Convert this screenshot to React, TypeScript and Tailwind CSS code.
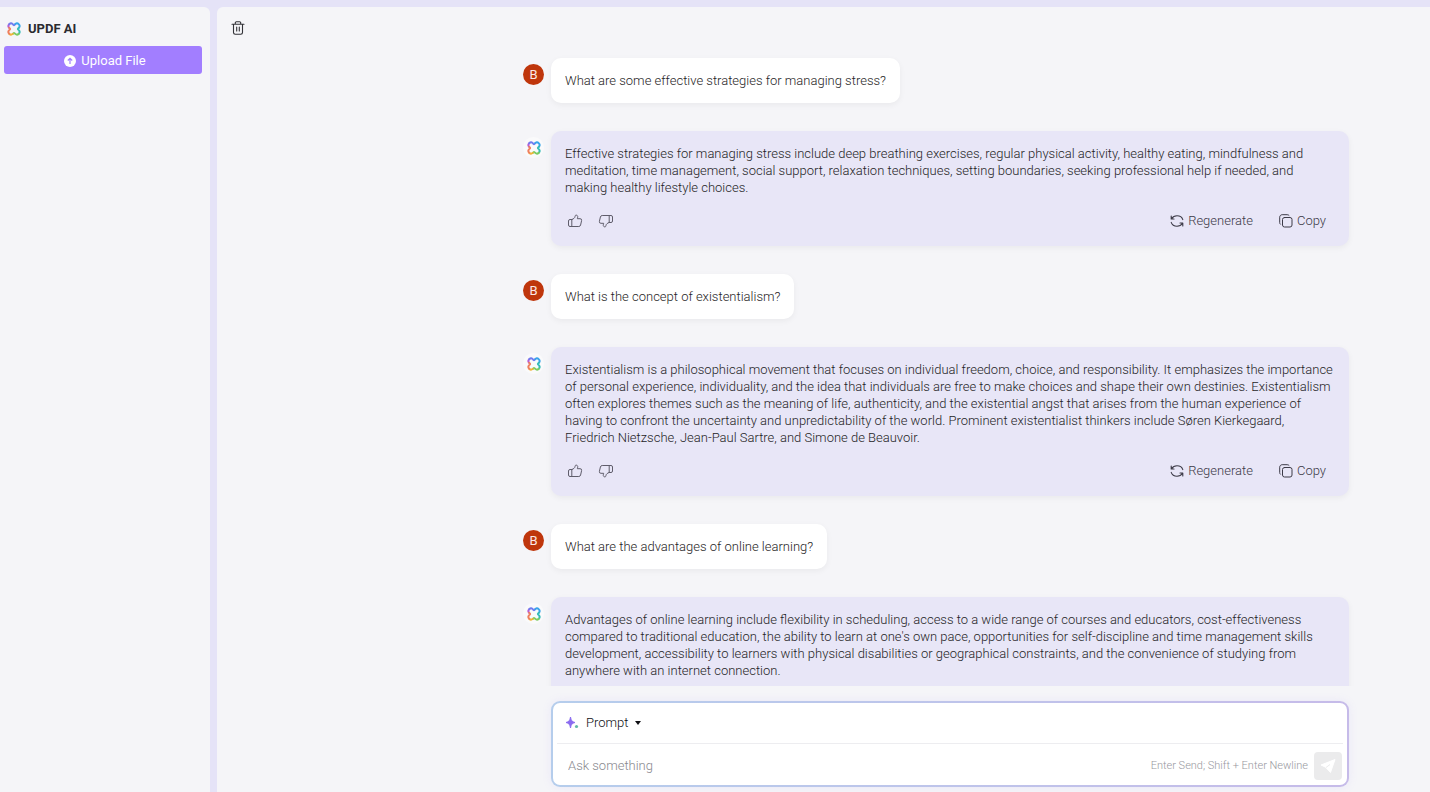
import { useState } from "react";

type Message = {
    question: string;
    answer: string;
    done: boolean;
};

const MESSAGES: Message[] = [
    {
        question: "What are some effective strategies for managing stress?",
        answer: "Effective strategies for managing stress include deep breathing exercises, regular physical activity, healthy eating, mindfulness and meditation, time management, social support, relaxation techniques, setting boundaries, seeking professional help if needed, and making healthy lifestyle choices.",
        done: true,
    },
    {
        question: "What is the concept of existentialism?",
        answer: "Existentialism is a philosophical movement that focuses on individual freedom, choice, and responsibility. It emphasizes the importance of personal experience, individuality, and the idea that individuals are free to make choices and shape their own destinies. Existentialism often explores themes such as the meaning of life, authenticity, and the existential angst that arises from the human experience of having to confront the uncertainty and unpredictability of the world. Prominent existentialist thinkers include Søren Kierkegaard, Friedrich Nietzsche, Jean-Paul Sartre, and Simone de Beauvoir.",
        done: true,
    },
    {
        question: "What are the advantages of online learning?",
        answer: "Advantages of online learning include flexibility in scheduling, access to a wide range of courses and educators, cost-effectiveness compared to traditional education, the ability to learn at one's own pace, opportunities for self-discipline and time management skills development, accessibility to learners with physical disabilities or geographical constraints, and the convenience of studying from anywhere with an internet connection.",
        done: false,
    },
];

function Logo() {
    return (
        <svg viewBox="0 0 28 28" className="size-[14px]" fill="none" strokeWidth="3.8" strokeLinecap="round" aria-hidden="true">
            <path d="M4.200 11.500A5 5 0 0 1 4.500 4.500" stroke="#b45fd6" />
            <path d="M4.500 4.500A5 5 0 0 1 11.500 4.200Q14 8.500 16.500 4.200" stroke="#6f7cf0" />
            <path d="M16.500 4.200A5 5 0 0 1 23.500 4.500A5 5 0 0 1 23.800 11.500" stroke="#3aa5ea" />
            <path d="M23.800 11.500Q19.500 14 23.800 16.500A5 5 0 0 1 23.500 23.500" stroke="#35bdb8" />
            <path d="M23.500 23.500A5 5 0 0 1 16.500 23.800Q14 19.500 11.500 23.800" stroke="#7ccb62" />
            <path d="M11.500 23.800A5 5 0 0 1 4.500 23.500" stroke="#f3b437" />
            <path d="M4.500 23.500A5 5 0 0 1 4.200 16.500Q8.500 14 4.200 11.500" stroke="#ef7f5e" />
        </svg>
    );
}

function ThumbIcon({ down = false }: { down?: boolean }) {
    return (
        <svg viewBox="0 0 16 16" className={down ? "size-4 rotate-180" : "size-4"} fill="none" stroke="currentColor" strokeWidth="1" strokeLinejoin="round" strokeLinecap="round" aria-hidden="true">
            <path d="M4.800 6.500V13.500M4.800 6.500C6.500 6 7.800 5 8 3.600C8.200 2.400 8.600 2 9.300 2.100C10.500 2.300 10.900 3.200 10.700 4.200L10.300 5.700H13A1.600 1.600 0 0 1 14.600 7.600L13.600 12A1.900 1.900 0 0 1 11.800 13.500H3A1.500 1.500 0 0 1 1.500 12V8A1.500 1.500 0 0 1 3 6.500H4.800Z" />
        </svg>
    );
}

function RegenerateIcon() {
    return (
        <svg viewBox="0 0 14 14" className="size-[14px]" fill="none" stroke="currentColor" strokeWidth="1.1" strokeLinecap="round" strokeLinejoin="round" aria-hidden="true">
            <path d="M1.200 2V5H4M1.500 4.800C2.800 2.800 4.800 1.800 7 1.800C9.800 1.800 12 3.200 12.800 5.600" />
            <path d="M12.800 12V9H10M12.500 9.200C11.200 11.200 9.200 12.200 7 12.200C4.200 12.200 2 10.800 1.200 8.400" />
        </svg>
    );
}

function CopyIcon() {
    return (
        <svg viewBox="0 0 14 14" className="size-[14px]" fill="none" stroke="currentColor" strokeWidth="1" strokeLinecap="round" aria-hidden="true">
            <rect x="3.500" y="3.500" width="9.500" height="9.500" rx="2" />
            <path d="M1.400 10.200C1 9.800 .7 9.400 .7 8.600V3.200C.7 1.800 1.800 .7 3.200 .7H8.200C9 .7 9.600 1 10 1.400" />
        </svg>
    );
}

function Question({ text }: { text: string }) {
    return (
        <div className="flex items-start gap-[7px]">
            <div className="mt-[6px] flex size-[21px] shrink-0 items-center justify-center rounded-full bg-[#bf360c] text-[13px] font-normal text-[#fbe9e7]">B</div>
            <p className="rounded-[10px] bg-white p-[14px] leading-[17px] shadow-[0_2px_6px_rgba(0,0,0,0.05)]">{text}</p>
        </div>
    );
}

function Answer({ text, done }: { text: string; done: boolean }) {
    return (
        <div className="flex items-start gap-[7px]">
            <div className="mt-[6px] flex size-[21px] shrink-0 items-center justify-center rounded-full bg-[#fafafb]">
                <Logo />
            </div>
            <div className="min-w-0 flex-1 rounded-[10px] bg-[#e8e6f7] p-[14px] shadow-[0_2px_6px_rgba(0,0,0,0.05)]">
                <p className="leading-[17px]">{text}</p>
                <div className="mt-[14px] flex h-[22px] items-center justify-between pr-[9px]">
                    {done && (
                        <>
                            <div className="flex gap-[15px] pl-[2px] text-[#5f5d6b]">
                                <button type="button" aria-label="Like" className="cursor-pointer">
                                    <ThumbIcon />
                                </button>
                                <button type="button" aria-label="Dislike" className="cursor-pointer">
                                    <ThumbIcon down />
                                </button>
                            </div>
                            <div className="flex gap-[26px] text-[#3c3a47]">
                                <button type="button" className="flex cursor-pointer items-center gap-1">
                                    <RegenerateIcon />
                                    Regenerate
                                </button>
                                <button type="button" className="flex cursor-pointer items-center gap-1">
                                    <CopyIcon />
                                    Copy
                                </button>
                            </div>
                        </>
                    )}
                </div>
            </div>
        </div>
    );
}

function PromptBox() {
    const [value, setValue] = useState("");

    return (
        <div className="mt-[15px] mb-[5px] ml-[28px] rounded-[9px] bg-gradient-to-r from-[#b5cdec] to-[#c6bbe9] p-[2px] shadow-[0_0_10px_rgba(160,140,250,0.12)]">
            <form onSubmit={(e) => e.preventDefault()} className="rounded-[7px] bg-white">
                <div className="mx-1 flex h-[41px] items-center border-b border-[#ededf0] pl-[8px]">
                    <button type="button" className="flex cursor-pointer items-center gap-[7px] text-[#0f0f14]">
                        <svg viewBox="0 0 14 14" className="size-[14px]" aria-hidden="true">
                            <path d="M5.500 1C6 4.500 7 5.800 10 6.500C7 7.200 6 8.500 5.500 12C5 8.500 4 7.200 1 6.500C4 5.800 5 4.500 5.500 1Z" fill="#8b6cf0" stroke="#8b6cf0" strokeWidth="1" strokeLinejoin="round" />
                            <circle cx="11.500" cy="10.500" r="1.600" fill="#62b9a8" />
                        </svg>
                        Prompt
                        <svg viewBox="0 0 6 4" className="h-1 w-[6px]" aria-hidden="true">
                            <path d="M0 0H6L3 4Z" fill="currentColor" />
                        </svg>
                    </button>
                </div>
                <div className="flex h-[41px] items-center pt-[3px] pr-[5px] pl-[15px]">
                    <input
                        value={value}
                        onChange={(e) => setValue(e.target.value)}
                        aria-label="Ask something"
                        placeholder="Ask something"
                        className="min-w-0 flex-1 outline-none placeholder:text-[#88888e]"
                    />
                    <span className="text-[11px] text-[#98989e]">Enter Send; Shift + Enter Newline</span>
                    <button type="submit" aria-label="Send" className="ml-[6px] flex size-7 cursor-pointer items-center justify-center rounded-[4px] bg-[#ebebec]">
                        <svg viewBox="0 0 16 16" className="size-4" fill="#fff" stroke="#fff" strokeWidth="1" strokeLinejoin="round" aria-hidden="true">
                            <path d="M15 1.500L1 7L5.500 9.200L10.500 14.500Z" />
                            <path d="M6 9.500L10 6.500" stroke="#ebebec" />
                        </svg>
                    </button>
                </div>
            </form>
        </div>
    );
}

export default function App() {
    return (
        <div className="flex h-screen gap-[7px] bg-[#e5e3f7] pt-[7px] font-[Roboto,sans-serif] text-[13px] font-light text-[#1f1e26]">
            <aside className="w-[210px] shrink-0 rounded-tr-[6px] bg-[#f5f5f8] px-1">
                <div className="flex h-[39px] items-center gap-[7px] pt-[4px] pl-[3px]">
                    <Logo />
                    <h1 className="font-bold text-[#2b2b30]">UPDF AI</h1>
                </div>
                <button type="button" className="flex h-7 w-[198px] cursor-pointer items-center justify-center gap-[5px] rounded-[3px] bg-[#a27eff] pt-px pl-1 font-normal text-white">
                    <svg viewBox="0 0 12 12" className="size-3" aria-hidden="true">
                        <circle cx="6" cy="6" r="6" fill="#fff" />
                        <path d="M6 9V3.500M3.800 5.500L6 3.300L8.200 5.500" fill="none" stroke="#a27eff" strokeWidth="1.2" />
                    </svg>
                    Upload File
                </button>
            </aside>

            <main className="flex min-w-0 flex-1 rounded-tl-[6px] bg-[#f5f5f8]">
                <div className="w-[286px] shrink-0 pt-[14px] pl-[14px]">
                    <button type="button" aria-label="Delete chat" className="block cursor-pointer text-[#333338]">
                        <svg viewBox="0 0 14 14" className="size-[14px]" fill="none" stroke="currentColor" strokeWidth="1.1" strokeLinecap="round" strokeLinejoin="round" aria-hidden="true">
                            <path d="M1 3.300H13M4.300 3V1.800A1 1 0 0 1 5.300 .8H8.700A1 1 0 0 1 9.700 1.800V3M2.500 3.500V11.500A1.700 1.700 0 0 0 4.200 13.200H9.800A1.700 1.700 0 0 0 11.500 11.500V3.500M5.700 6V10M8.300 6V10" />
                        </svg>
                    </button>
                </div>
                <div className="flex min-w-0 flex-1 flex-col">
                    <div className="flex min-h-0 flex-1 flex-col gap-7 overflow-y-auto pt-[51px] pr-[81px] pl-5 [scrollbar-width:none]">
                        {MESSAGES.map((message) => (
                            <div key={message.question} className="flex flex-col gap-7">
                                <Question text={message.question} />
                                <Answer text={message.answer} done={message.done} />
                            </div>
                        ))}
                    </div>
                    <div className="pr-[81px] pl-5">
                        <PromptBox />
                    </div>
                </div>
            </main>
        </div>
    );
}
